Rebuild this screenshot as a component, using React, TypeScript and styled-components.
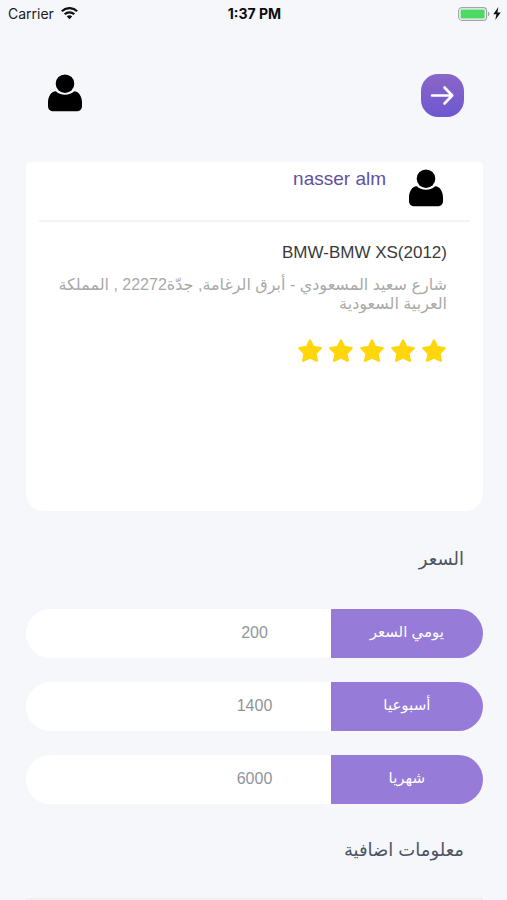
import React, { useState } from 'react';
import styled, { createGlobalStyle } from 'styled-components';

const GlobalStyle = createGlobalStyle`
  *, *::before, *::after { box-sizing: border-box; }
  body {
    margin: 0;
    background: #f5f7fb;
    font-family: "Liberation Sans", "DejaVu Sans", sans-serif;
  }
  h1, h2, p { margin: 0; font-weight: 400; }
`;

const Screen = styled.div`
  min-height: 100vh;
  background: #f5f7fb;
`;

const StatusBar = styled.div`
  display: grid;
  grid-template-columns: 1fr auto 1fr;
  align-items: center;
  height: 27px;
  padding: 0 6px 0 8px;
  font-family: Inter, "Liberation Sans", sans-serif;
  font-size: 14px;
  color: #1b1b1e;
`;

const StatusGroup = styled.div<{ $end?: boolean }>`
  display: flex;
  align-items: center;
  justify-content: ${(p) => (p.$end ? 'flex-end' : 'flex-start')};
  gap: ${(p) => (p.$end ? 3 : 7)}px;
`;

const Clock = styled.time`
  font-weight: 700;
  color: #0c0c0e;
`;

const NavBar = styled.header`
  display: flex;
  justify-content: space-between;
  align-items: flex-start;
  padding: 47px 43px 45px 48px;
`;

const IconButton = styled.button`
  display: flex;
  padding: 0;
  border: 0;
  background: none;
  cursor: pointer;
`;

const BackButton = styled(IconButton)`
  align-items: center;
  justify-content: center;
  width: 43px;
  height: 43px;
  border-radius: 17px;
  background: linear-gradient(#8b65c8, #6d58d0);
`;

const Content = styled.main`
  padding: 0 24px 0 26px;
`;

const Card = styled.section`
  min-height: 349px;
  padding: 0 13px;
  border-radius: 4px 4px 18px 18px;
  background: #fff;
`;

const Owner = styled.div`
  display: flex;
  align-items: flex-start;
  gap: 23px;
  padding: 7px 27px 13px;
  border-bottom: 2px solid #f4f4f6;
`;

const OwnerName = styled.h1`
  font-size: 19px;
  line-height: 20px;
  color: #6350a0;
`;

const Details = styled.div`
  padding: 20px 23px 0 16px;
`;

const CarName = styled.h2`
  font-size: 17px;
  line-height: 22px;
  color: #3a3a3a;
`;

const Address = styled.p`
  margin-top: 11px;
  font-size: 16px;
  line-height: 19px;
  color: #a9a9a9;
`;

const Stars = styled.div`
  display: flex;
  gap: 5px;
  margin-top: 25px;
`;

const SectionTitle = styled.h2`
  padding: 0 19px;
  font-size: 18px;
  line-height: 26px;
  color: #4c5463;
`;

const PriceSection = styled.section`
  padding: 35px 0 33px;
`;

const PriceList = styled.div`
  display: grid;
  gap: 24px;
  margin-top: 37px;
`;

const PriceRow = styled.div`
  display: grid;
  grid-template-columns: repeat(3, 1fr);
  height: 49px;
  border-radius: 25px;
  background: #fff;
  overflow: hidden;
`;

const PriceLabel = styled.label`
  display: flex;
  align-items: center;
  justify-content: center;
  padding-bottom: 3px;
  background: #967bd8;
  font-size: 15px;
  color: #fff;
`;

const PriceInput = styled.input`
  min-width: 0;
  padding: 0 0 2px;
  border: 0;
  background: none;
  text-align: center;
  font-family: inherit;
  font-size: 16px;
  color: #8f959d;
`;

const MoreSection = styled.section`
  padding-bottom: 35px;
  border-bottom: 2px solid #efeff2;
`;

const PersonIcon = () => (
  <svg width="34" height="38" viewBox="0 0 34 38" aria-hidden="true">
    <circle cx="17" cy="9.7" r="9.3" />
    <path d="M7.8 17.3C10 19.6 13.3 20.7 17 20.7S24 19.6 26.2 17.3C31 17.6 34 22.6 34 28.5V32C34 35.4 31.6 37.3 28.5 37.3H5.5C2.4 37.3 0 35.4 0 32V28.5C0 22.6 3 17.6 7.8 17.3Z" />
  </svg>
);

const ArrowIcon = () => (
  <svg width="26" height="24" viewBox="0 0 26 24" fill="none" stroke="#fff" strokeWidth="2.6" strokeLinecap="round" strokeLinejoin="round" aria-hidden="true">
    <path d="M2 11.5H22M14.5 3.5L22.2 11.5L14.5 19.5" />
  </svg>
);

const WifiIcon = () => (
  <svg width="17" height="13" viewBox="0 0 17 13" fill="none" stroke="#111" strokeWidth="2.2" aria-hidden="true">
    <path d="M.8 4.3C5.1 0 11.9 0 16.2 4.3" />
    <path d="M3.7 7.3C6.4 4.6 10.6 4.6 13.3 7.3" />
    <path d="M8.5 12.2L5.8 9.4C7.3 7.9 9.7 7.9 11.2 9.4Z" fill="#111" stroke="none" />
  </svg>
);

const BatteryIcon = () => (
  <svg width="32" height="14" viewBox="0 0 32 14" aria-hidden="true">
    <rect x=".6" y=".6" width="28" height="12.8" rx="3.4" fill="#f5f7fb" stroke="#a3a4a8" strokeWidth="1.1" />
    <rect x="2.6" y="2.6" width="24" height="8.8" rx="1" fill="#4cd964" />
    <path d="M30 4.8C32 5.5 32 8.5 30 9.2Z" fill="#a3a4a8" />
  </svg>
);

const BoltIcon = () => (
  <svg width="8" height="13" viewBox="0 0 8 13" aria-hidden="true">
    <path d="M5.4 0L.3 7.2H3.4L2.3 13L7.7 5.4H4.4Z" fill="#111" />
  </svg>
);

const StarIcon = () => (
  <svg width="26" height="26" viewBox="0 0 26 26" aria-hidden="true">
    <path
      d="M13 2.6L16.1 9L23.6 10.2L18.4 15.5L19.8 22.7L13 19.5L6.2 22.7L7.6 15.5L2.4 10.2L9.9 9Z"
      fill="#ffd60a" stroke="#ffd60a" strokeWidth="2.4" strokeLinejoin="round"
    />
  </svg>
);

const PRICES = [
  { id: 'daily', label: 'يومي السعر', value: '200' },
  { id: 'weekly', label: 'أسبوعيا', value: '1400' },
  { id: 'monthly', label: 'شهريا', value: '6000' },
];

export default function App() {
  const [prices, setPrices] = useState(PRICES);

  const updatePrice = (id: string, value: string) =>
    setPrices((list) => list.map((p) => (p.id === id ? { ...p, value } : p)));

  return (
    <Screen>
      <GlobalStyle />
      <StatusBar>
        <StatusGroup>
          <span>Carrier</span>
          <WifiIcon />
        </StatusGroup>
        <Clock>1:37 PM</Clock>
        <StatusGroup $end>
          <BatteryIcon />
          <BoltIcon />
        </StatusGroup>
      </StatusBar>

      <NavBar>
        <IconButton type="button" aria-label="الملف الشخصي">
          <PersonIcon />
        </IconButton>
        <BackButton type="button" aria-label="رجوع">
          <ArrowIcon />
        </BackButton>
      </NavBar>

      <Content dir="rtl" lang="ar">
        <Card>
          <Owner>
            <PersonIcon />
            <OwnerName>nasser alm</OwnerName>
          </Owner>
          <Details>
            <CarName><bdi>BMW-BMW XS(2012)</bdi></CarName>
            <Address>شارع سعيد المسعودي - أبرق الرغامة, جدّة22272 , المملكة العربية السعودية</Address>
            <Stars role="img" aria-label="5 / 5">
              {[1, 2, 3, 4, 5].map((n) => <StarIcon key={n} />)}
            </Stars>
          </Details>
        </Card>

        <PriceSection>
          <SectionTitle>السعر</SectionTitle>
          <PriceList>
            {prices.map((p) => (
              <PriceRow key={p.id}>
                <PriceLabel htmlFor={p.id}>{p.label}</PriceLabel>
                <PriceInput
                  id={p.id}
                  inputMode="numeric"
                  value={p.value}
                  onChange={(e) => updatePrice(p.id, e.target.value)}
                />
              </PriceRow>
            ))}
          </PriceList>
        </PriceSection>

        <MoreSection>
          <SectionTitle>معلومات اضافية</SectionTitle>
        </MoreSection>
      </Content>
    </Screen>
  );
}
